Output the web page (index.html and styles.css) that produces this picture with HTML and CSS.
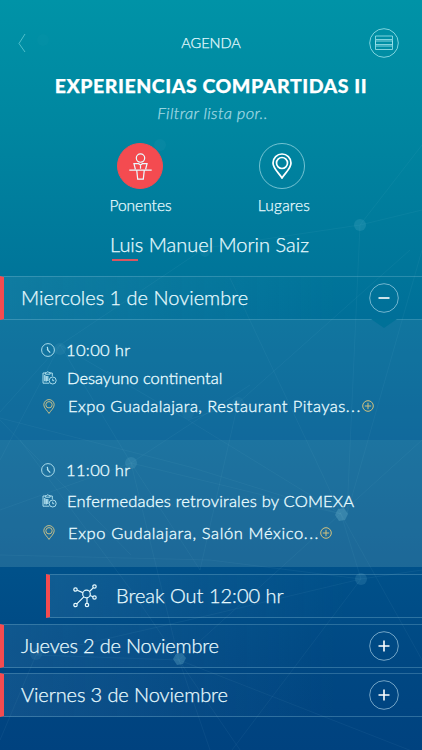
FILE: index.html
```html
<!DOCTYPE html>
<html lang="es">
<head>
<meta charset="utf-8">
<title>Agenda</title>
<link rel="stylesheet" href="styles.css">
</head>
<body>
<svg class="defs" aria-hidden="true">
  <symbol id="clock" viewBox="0 0 14 14"><circle cx="7" cy="7" r="6.4"/><path d="M6.3 3.8 7 7.3 9.2 9.6M7 7.6 6.2 6" stroke-width="1.200"/></symbol>
  <symbol id="clip" viewBox="0 0 15 14"><path d="M3.4 2H1v10.2h6.2M8 2h2.3v3.3M3.4 3.2V1.6h1.2a1.2 1.2 0 0 1 2.3 0h1.2v1.6z"/><path d="M2.8 4v6.3M4.3 5v5.6M5.8 5v5" stroke-width="1.2"/><circle cx="10.7" cy="9.5" r="3.5"/><path d="M10.7 7.7v2h1.5"/></symbol>
  <symbol id="pin" viewBox="0 0 20 26"><path d="M10 25C7 20 1 15.500 1 10a9 9 0 0 1 18 0c0 5.500-6 10-9 15z"/><circle cx="10" cy="10" r="5.500"/></symbol>
  <symbol id="more" viewBox="0 0 12 12"><circle cx="6" cy="6" r="5.300"/><path d="M6 2.800v6.400M2.800 6h6.400"/></symbol>
  <symbol id="ring-plus" viewBox="0 0 30 30"><circle class="ring" cx="15" cy="15" r="14.300"/><path class="sign" d="M9.500 15h11M15 9.500v11"/></symbol>
  <symbol id="ring-minus" viewBox="0 0 30 30"><circle class="ring" cx="15" cy="15" r="14.300"/><path class="sign" d="M9.500 15h11"/></symbol>
</svg>
<main class="screen">
  <svg class="network" viewBox="0 0 422 750" aria-hidden="true">
    <path d="M422 145 360 225 205 248 60 345 0 412M360 225 347 514M360 225 422 210M347 514 422 250M230 278 341 514 190 467 0 418M341 514 131 463 0 510M131 463 179 660 210 750M0 420 131 555M60 345 0 460M188 420 341 514 422 660M238 403 410 250M238 403 188 420 60 345M238 403 200 570 131 463 250 385M361 579 232 750M361 579 210 615 36 655 0 740M361 579 422 570M36 655 179 660 422 755M20 440 131 590 240 750M179 660 422 440M0 555 210 560 361 579M361 579 341 514M60 345 131 463"/>
    <g><circle cx="43" cy="40" r="6" opacity=".12"/><circle cx="160" cy="145" r="6" opacity=".3"/><circle cx="360" cy="225" r="6" opacity=".8"/><circle cx="205" cy="252" r="5" opacity=".4"/><circle cx="60" cy="349" r="6" opacity=".5"/><circle cx="238" cy="403" r="6" opacity=".35"/><circle cx="188" cy="413" r="6" opacity=".35"/><circle cx="131" cy="463" r="6" opacity=".8"/><path class="bright" d="m338 509 6-1 4 6-3 6-6 1-4-6z"/><circle cx="361" cy="579" r="6" opacity=".8"/><circle cx="36" cy="654" r="6" opacity=".5"/><path class="bright" d="m176 654 6-1 4 5-3 6-6 1-4-6z"/></g>
  </svg>

  <header class="topbar">
    <svg class="back" viewBox="0 0 8 20"><path d="M7 1 1 10.500 7 19"/></svg>
    <h1 class="page-name">AGENDA</h1>
    <svg class="menu" viewBox="0 0 30 30"><circle cx="15" cy="15" r="14.300"/><path d="M6.500 8h17v3.500h-17zM6.500 13h17v3.500h-17zM6.500 18h17v3.500h-17zM6.500 11.500v6.500M23.500 11.500v6.500"/></svg>
  </header>

  <h2 class="title">EXPERIENCIAS COMPARTIDAS II</h2>
  <p class="hint">Filtrar lista por..</p>

  <nav class="filters">
    <div class="filter">
      <span class="disc active"><svg class="speaker" viewBox="0 0 24 30"><circle cx="12" cy="6.500" r="4.500"/><path d="M6.500 18.500 5 12.500h5l2 1.500 2-1.500h5l-1.500 6M12 14v4M0 19.500h24M8 20l1 9h6l1-9"/></svg></span>
      <span class="filter-label ponentes">Ponentes</span>
    </div>
    <div class="filter">
      <span class="disc"><svg class="place"><use href="#pin"/></svg></span>
      <span class="filter-label lugares">Lugares</span>
    </div>
  </nav>

  <p class="speaker-name"><span class="marked">Luis</span> Manuel Morin Saiz</p>

  <section class="day open">
    <h3 class="day-name d1">Miercoles 1 de Noviembre</h3>
    <svg class="toggle"><use href="#ring-minus"/></svg>
    <i class="notch"></i>
  </section>
  <article class="event first">
    <div class="line time"><svg class="icon"><use href="#clock"/></svg><span class="t-time">10:00 hr</span></div>
    <div class="line"><svg class="icon clip"><use href="#clip"/></svg><span class="t-a">Desayuno continental</span></div>
    <div class="line venue"><svg class="icon pin"><use href="#pin"/></svg><span class="t-b">Expo Guadalajara, Restaurant Pitayas<span class="dots">...</span></span><svg class="more"><use href="#more"/></svg></div>
  </article>
  <article class="event second">
    <div class="line time"><svg class="icon"><use href="#clock"/></svg><span class="t-time">11:00 hr</span></div>
    <div class="line"><svg class="icon clip"><use href="#clip"/></svg><span class="t-c">Enfermedades retrovirales by COMEXA</span></div>
    <div class="line venue"><svg class="icon pin"><use href="#pin"/></svg><span class="t-d">Expo Gudalajara, Salón México<span class="dots">...</span></span><svg class="more"><use href="#more"/></svg></div>
  </article>
  <section class="day break">
    <svg class="nodes" viewBox="0 0 24 24"><circle cx="13.500" cy="10" r="3.800"/><circle cx="2.500" cy="5.500" r="1.700"/><circle cx="21.500" cy="2.500" r="1.700"/><circle cx="21.500" cy="13.500" r="1.700"/><circle cx="2.500" cy="21" r="1.700"/><circle cx="14" cy="21" r="1.700"/><path d="m4.200 6.200 5.600 2.400M16.500 7.500l3.700-3.700M17 11.500l3 1.300M3.800 19.800l7-7M14 14v5.200"/></svg>
    <h3 class="day-name break-name">Break Out 12:00 hr</h3>
  </section>
  <section class="day">
    <h3 class="day-name d2">Jueves 2 de Noviembre</h3>
    <svg class="toggle"><use href="#ring-plus"/></svg>
  </section>
  <section class="day last">
    <h3 class="day-name d3">Viernes 3 de Noviembre</h3>
    <svg class="toggle"><use href="#ring-plus"/></svg>
  </section>
</main>
</body>
</html>
```
FILE: styles.css
```css
* { box-sizing: border-box; margin: 0; padding: 0; }
body { width: 422px; height: 750px; overflow: hidden; }
.defs { position: absolute; width: 0; height: 0; }
.screen {
  position: relative; display: flex; flex-direction: column;
  width: 422px; height: 750px; overflow: hidden;
  background: linear-gradient(#0093a7 0, #0086a0 130px, #00769a 265px, #006a98 360px, #006095 440px, #00518a 570px, #004883 660px, #00427f 750px);
  color: #e8fbff; font-family: Lato, "Liberation Sans", sans-serif; font-weight: 300; white-space: nowrap;
  -webkit-text-stroke: .25px currentColor;
}
.screen > * { position: relative; flex: none; }
.screen svg { fill: none; stroke: currentColor; flex: none; }
.screen > .network { position: absolute; inset: 0; width: 422px; height: 750px; stroke: rgba(150,215,235,.06); }
.network g { fill: rgba(130,205,225,.18); stroke: none; }
.network .bright { fill: rgba(130,205,225,.26); }

.topbar { display: grid; grid-template-columns: 60px 1fr 60px; align-items: center; height: 30px; margin-top: 28px; }
.back { width: 8px; height: 20px; margin-left: 18px; color: #63cbd4; stroke-width: .8; }
.page-name { font-size: 14.500px; font-weight: 300; text-align: center; line-height: 30px; }
.menu { width: 30px; height: 30px; margin-left: 7px; color: #9ee5ec; stroke-width: .8; }
.title { margin-top: 15px; height: 25px; line-height: 25px; text-align: center; font-size: 19.500px; font-weight: 900; letter-spacing: .55px; color: #fff; }
.hint { margin: 4px 0 0 3px; height: 23px; line-height: 23px; text-align: center; font-size: 16.500px; font-style: italic; letter-spacing: .35px; color: #a3dae4; }

.filters { display: grid; grid-template-columns: 60px 60px; column-gap: 82px; justify-content: center; margin-top: 18px; height: 75px; }
.filter { display: flex; flex-direction: column; align-items: center; }
.disc { display: grid; place-items: center; width: 46px; height: 46px; border: 1px solid rgba(190,236,244,.6); border-radius: 50%; }
.disc.active { background: #f44b50; border-color: #f44b50; }
.speaker { width: 23px; height: 28px; stroke-width: 1.300; }
.place { width: 20px; height: 26px; stroke-width: 1.700; color: #fff; }
.filter-label { margin-top: 4px; height: 24px; line-height: 24px; font-size: 15.500px; }
.ponentes { padding-left: 1px; }
.lugares { padding-left: 4px; letter-spacing: .2px; }
.speaker-name { margin: 13px 0 0 110px; height: 45px; line-height: 26px; font-size: 20px; }
.marked { position: relative; }
.marked::after { content: ""; position: absolute; left: 2px; width: 26px; bottom: -5px; height: 2px; background: #d95661; }

.day { display: flex; align-items: center; justify-content: space-between; height: 44px; margin-top: 5px; padding: 0 23px 0 17px; border-left: 4px solid #f44b50; border-top: 1px solid rgba(150,205,225,.27); border-bottom: 1px solid rgba(150,205,225,.3); background: linear-gradient(90deg, rgba(130,180,210,.12), rgba(130,180,210,0) 80%); }
.day.open { margin-top: 0; }
.day-name { font-size: 20px; line-height: 26px; font-weight: 300; margin-top: -2px; }
.d2 { letter-spacing: -.2px; }
.d3 { letter-spacing: -.1px; }
.toggle { width: 30px; height: 30px; }
.ring { stroke: rgba(195,230,245,.65); stroke-width: .9; }
.sign { stroke: #fff; stroke-width: 1.600; }
.notch { position: absolute; z-index: 2; right: 25px; top: 42px; width: 26px; height: 9px; background: #007198; clip-path: polygon(0 0, 100% 0, 50% 100%); }

.event { display: flex; flex-direction: column; padding-left: 41px; font-size: 16.500px; -webkit-text-stroke-width: .35px; }
.first { height: 120px; padding-top: 16px; background: rgba(120,165,195,.14); }
.second { height: 127px; padding-top: 14px; background: rgba(130,185,200,.22); }
.line { display: flex; align-items: center; height: 28px; }
.second .line { height: 31.500px; }
.icon { width: 14px; height: 14px; margin-right: 11px; stroke-width: .9; color: #b9e6f3; }
.icon.clip { width: 15px; margin-left: 1px; margin-right: 10px; }
.icon.pin { width: 12px; height: 15px; margin-left: 2px; margin-right: 13px; stroke-width: 1.700; color: #c6bf8a; }
.more { width: 12px; height: 12px; color: #d3c27f; }
.t-time { letter-spacing: .35px; }
.t-b { letter-spacing: .45px; }
.t-c { letter-spacing: .2px; }
.t-d { letter-spacing: .62px; }
.dots { letter-spacing: 1.500px; }

.break { height: 44px; margin: 7px 0 0 46px; padding-left: 23px; justify-content: flex-start; }
.nodes { width: 24px; height: 24px; margin-right: 19px; stroke-width: 1.200; }
.break + .day { margin-top: 6px; }
```
